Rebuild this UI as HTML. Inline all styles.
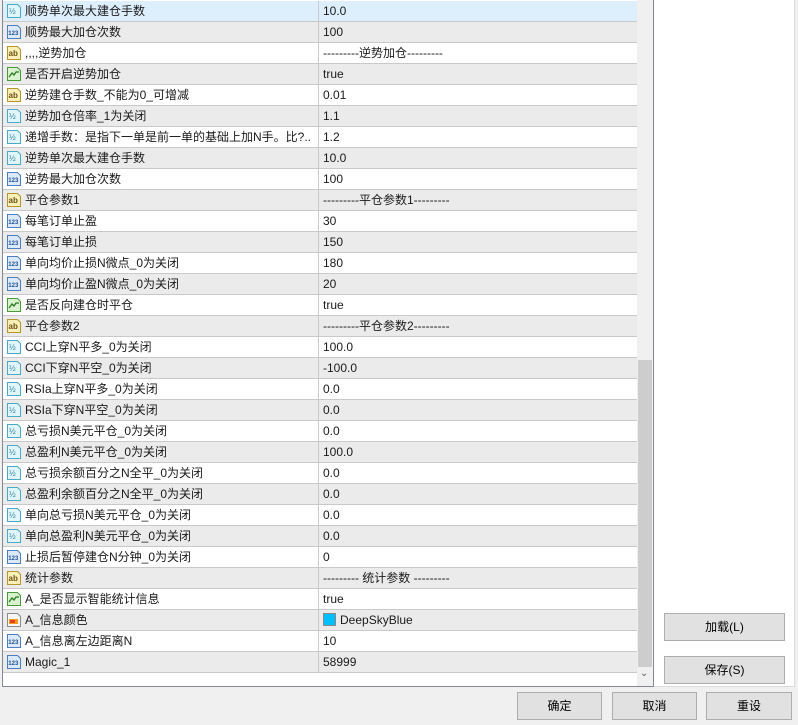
<!DOCTYPE html>
<html><head><meta charset="utf-8">
<style>
*{margin:0;padding:0;box-sizing:border-box}
body{width:798px;height:725px;background:#f0f0f0;position:relative;overflow:hidden;font-family:"Liberation Sans","Noto Sans CJK SC",sans-serif;font-size:12px;color:#1a1a1a}
#tbl{position:absolute;left:2px;top:0;width:652px;height:687px;background:#fff;border:1px solid #828790;border-top:none}
.r{position:absolute;left:0;width:634px;height:21px;border-bottom:1px solid #c9c9c9}
.g{background:#ebebeb}
.s{background:#ddeefc}
.r .n{position:absolute;left:22px;top:0;height:20px;line-height:20px;white-space:nowrap}
.r .v{position:absolute;left:320px;top:0;height:20px;line-height:20px;white-space:nowrap}
.r .d{position:absolute;left:315px;top:0;width:1px;height:21px;background:#c9c9c9}
.r svg{position:absolute;left:3px;top:2px}
#sb{position:absolute;left:634px;top:0;width:16px;height:686px;background:#f0f0f0}
#th{position:absolute;left:1px;top:360px;width:14px;height:307px;background:#cdcdcd}
#right{position:absolute;left:654px;top:0;width:141px;height:687px;background:#fff;border-right:1px solid #dcdcdc;border-bottom:1px solid #dcdcdc}
.b{position:absolute;background:#e1e1e1;border:1px solid #adadad;text-align:center;line-height:26px;font-size:12px;color:#000}
</style></head><body>
<svg width="0" height="0" style="position:absolute">
<defs>
<g id="ih"><path d="M1.5 1.5h10l3 3v10h-13z" fill="#e0f6fb" stroke="#4aa9c4"/><text x="3" y="11" font-size="8" fill="#2a7fa0" font-family="Liberation Sans">½</text></g>
<g id="in"><path d="M1.5 1.5h10l3 3v10h-13z" fill="#dbe9f9" stroke="#4d7fc0"/><text x="2.3" y="11" font-size="6" font-weight="bold" fill="#1f4f93" font-family="Liberation Sans">123</text></g>
<g id="ia"><path d="M1.5 1.5h10l3 3v10h-13z" fill="#fbf0b8" stroke="#b6962c"/><text x="2.5" y="11" font-size="8" font-weight="bold" fill="#6a5010" font-family="Liberation Sans">ab</text></g>
<g id="ib"><path d="M1.5 1.5h10l3 3v10h-13z" fill="#d9f2d0" stroke="#4b9a3a"/><path d="M3 11l3-4 2 2 2-3h3" fill="none" stroke="#2c7a20" stroke-width="1.3"/></g>
<g id="ic"><path d="M1.5 1.5h10l3 3v10h-13z" fill="#f6f6f6" stroke="#8a8a8a"/><rect x="3" y="7" width="9" height="5" fill="#f39a1c"/><rect x="4" y="8" width="5" height="3" fill="#e8401c"/></g>
</defs></svg>
<div id="tbl">
<div class="r s" style="top:1px"><svg width="16" height="16"><use href="#ih"/></svg><span class="n">顺势单次最大建仓手数</span><i class="d"></i><span class="v">10.0</span></div>
<div class="r g" style="top:22px"><svg width="16" height="16"><use href="#in"/></svg><span class="n">顺势最大加仓次数</span><i class="d"></i><span class="v">100</span></div>
<div class="r" style="top:43px"><svg width="16" height="16"><use href="#ia"/></svg><span class="n">,,,,逆势加仓</span><i class="d"></i><span class="v">---------逆势加仓---------</span></div>
<div class="r g" style="top:64px"><svg width="16" height="16"><use href="#ib"/></svg><span class="n">是否开启逆势加仓</span><i class="d"></i><span class="v">true</span></div>
<div class="r" style="top:85px"><svg width="16" height="16"><use href="#ia"/></svg><span class="n">逆势建仓手数_不能为0_可增减</span><i class="d"></i><span class="v">0.01</span></div>
<div class="r g" style="top:106px"><svg width="16" height="16"><use href="#ih"/></svg><span class="n">逆势加仓倍率_1为关闭</span><i class="d"></i><span class="v">1.1</span></div>
<div class="r" style="top:127px"><svg width="16" height="16"><use href="#ih"/></svg><span class="n">递增手数：是指下一单是前一单的基础上加N手。比?..</span><i class="d"></i><span class="v">1.2</span></div>
<div class="r g" style="top:148px"><svg width="16" height="16"><use href="#ih"/></svg><span class="n">逆势单次最大建仓手数</span><i class="d"></i><span class="v">10.0</span></div>
<div class="r" style="top:169px"><svg width="16" height="16"><use href="#in"/></svg><span class="n">逆势最大加仓次数</span><i class="d"></i><span class="v">100</span></div>
<div class="r g" style="top:190px"><svg width="16" height="16"><use href="#ia"/></svg><span class="n">平仓参数1</span><i class="d"></i><span class="v">---------平仓参数1---------</span></div>
<div class="r" style="top:211px"><svg width="16" height="16"><use href="#in"/></svg><span class="n">每笔订单止盈</span><i class="d"></i><span class="v">30</span></div>
<div class="r g" style="top:232px"><svg width="16" height="16"><use href="#in"/></svg><span class="n">每笔订单止损</span><i class="d"></i><span class="v">150</span></div>
<div class="r" style="top:253px"><svg width="16" height="16"><use href="#in"/></svg><span class="n">单向均价止损N微点_0为关闭</span><i class="d"></i><span class="v">180</span></div>
<div class="r g" style="top:274px"><svg width="16" height="16"><use href="#in"/></svg><span class="n">单向均价止盈N微点_0为关闭</span><i class="d"></i><span class="v">20</span></div>
<div class="r" style="top:295px"><svg width="16" height="16"><use href="#ib"/></svg><span class="n">是否反向建仓时平仓</span><i class="d"></i><span class="v">true</span></div>
<div class="r g" style="top:316px"><svg width="16" height="16"><use href="#ia"/></svg><span class="n">平仓参数2</span><i class="d"></i><span class="v">---------平仓参数2---------</span></div>
<div class="r" style="top:337px"><svg width="16" height="16"><use href="#ih"/></svg><span class="n">CCI上穿N平多_0为关闭</span><i class="d"></i><span class="v">100.0</span></div>
<div class="r g" style="top:358px"><svg width="16" height="16"><use href="#ih"/></svg><span class="n">CCI下穿N平空_0为关闭</span><i class="d"></i><span class="v">-100.0</span></div>
<div class="r" style="top:379px"><svg width="16" height="16"><use href="#ih"/></svg><span class="n">RSIa上穿N平多_0为关闭</span><i class="d"></i><span class="v">0.0</span></div>
<div class="r g" style="top:400px"><svg width="16" height="16"><use href="#ih"/></svg><span class="n">RSIa下穿N平空_0为关闭</span><i class="d"></i><span class="v">0.0</span></div>
<div class="r" style="top:421px"><svg width="16" height="16"><use href="#ih"/></svg><span class="n">总亏损N美元平仓_0为关闭</span><i class="d"></i><span class="v">0.0</span></div>
<div class="r g" style="top:442px"><svg width="16" height="16"><use href="#ih"/></svg><span class="n">总盈利N美元平仓_0为关闭</span><i class="d"></i><span class="v">100.0</span></div>
<div class="r" style="top:463px"><svg width="16" height="16"><use href="#ih"/></svg><span class="n">总亏损余额百分之N全平_0为关闭</span><i class="d"></i><span class="v">0.0</span></div>
<div class="r g" style="top:484px"><svg width="16" height="16"><use href="#ih"/></svg><span class="n">总盈利余额百分之N全平_0为关闭</span><i class="d"></i><span class="v">0.0</span></div>
<div class="r" style="top:505px"><svg width="16" height="16"><use href="#ih"/></svg><span class="n">单向总亏损N美元平仓_0为关闭</span><i class="d"></i><span class="v">0.0</span></div>
<div class="r g" style="top:526px"><svg width="16" height="16"><use href="#ih"/></svg><span class="n">单向总盈利N美元平仓_0为关闭</span><i class="d"></i><span class="v">0.0</span></div>
<div class="r" style="top:547px"><svg width="16" height="16"><use href="#in"/></svg><span class="n">止损后暂停建仓N分钟_0为关闭</span><i class="d"></i><span class="v">0</span></div>
<div class="r g" style="top:568px"><svg width="16" height="16"><use href="#ia"/></svg><span class="n">统计参数</span><i class="d"></i><span class="v">--------- 统计参数 ---------</span></div>
<div class="r" style="top:589px"><svg width="16" height="16"><use href="#ib"/></svg><span class="n">A_是否显示智能统计信息</span><i class="d"></i><span class="v">true</span></div>
<div class="r g" style="top:610px"><svg width="16" height="16"><use href="#ic"/></svg><span class="n">A_信息颜色</span><i class="d"></i><span class="v"><span style="display:inline-block;width:13px;height:13px;background:#00bfff;border:1px solid #888;vertical-align:-2px;margin-right:4px"></span>DeepSkyBlue</span></div>
<div class="r" style="top:631px"><svg width="16" height="16"><use href="#in"/></svg><span class="n">A_信息离左边距离N</span><i class="d"></i><span class="v">10</span></div>
<div class="r g" style="top:652px"><svg width="16" height="16"><use href="#in"/></svg><span class="n">Magic_1</span><i class="d"></i><span class="v">58999</span></div>
<div id="sb"><div id="th"></div><span style="position:absolute;left:3px;top:668px;font-size:10px;color:#606060">&#8964;</span></div>
</div>
<div id="right"></div>
<div class="b" style="left:664px;top:613px;width:121px;height:28px">加载(L)</div>
<div class="b" style="left:664px;top:656px;width:121px;height:28px">保存(S)</div>
<div class="b" style="left:517px;top:692px;width:85px;height:28px">确定</div>
<div class="b" style="left:612px;top:692px;width:85px;height:28px">取消</div>
<div class="b" style="left:706px;top:692px;width:86px;height:28px">重设</div>
</body></html>
